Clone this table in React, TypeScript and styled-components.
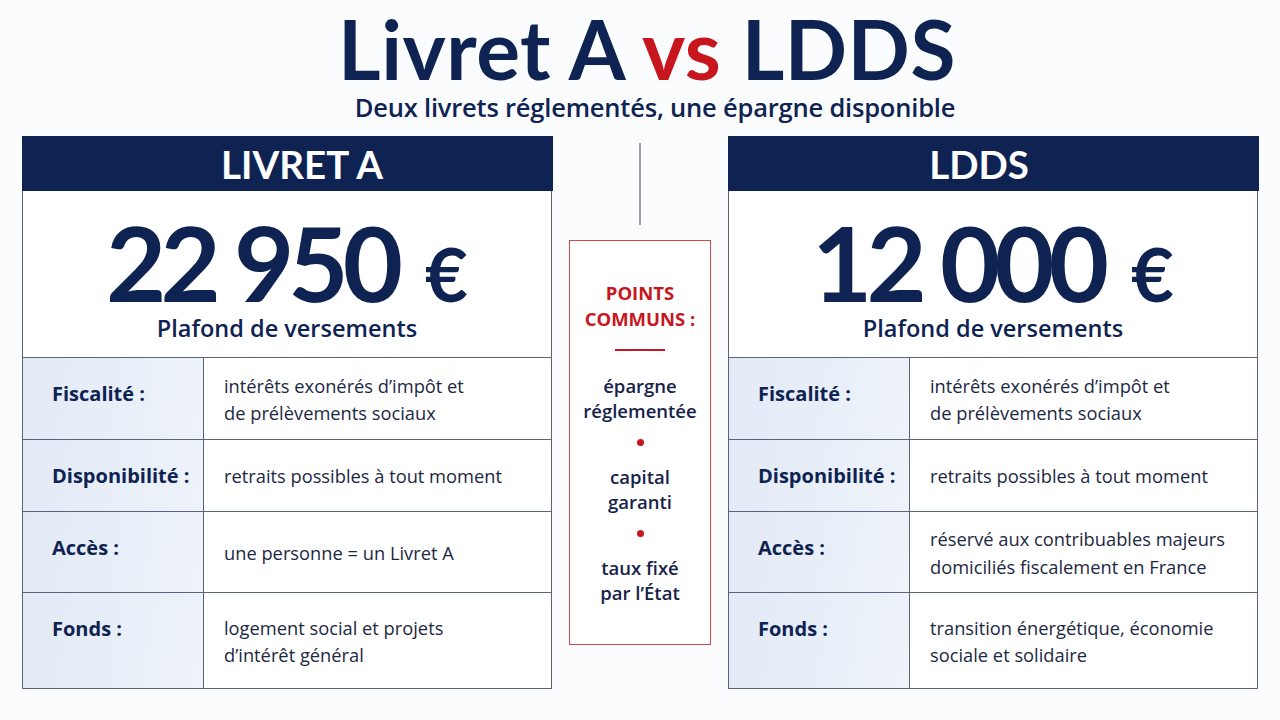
import React from "react";
import styled, { createGlobalStyle } from "styled-components";

const GlobalStyle = createGlobalStyle`
  html, body { margin: 0; padding: 0; }
  body {
    background: #fbfcfe;
    font-family: "Open Sans", Lato, sans-serif;
    color: #0f2350;
  }
`;

const NAVY = "#0e2352";
const RED = "#c8161e";
const LINE = "#5a6479";

const Page = styled.div`
  width: 1280px;
  height: 720px;
  display: flex;
  flex-direction: column;
  align-items: center;
  overflow: hidden;
`;

const Title = styled.h1`
  margin: 0 0 0 14px;
  font-family: Lato, "Open Sans", sans-serif;
  font-size: 82px;
  line-height: 96px;
  font-weight: 700;
  color: ${NAVY};
  letter-spacing: 0.5px;
`;

const Accent = styled.span`
  color: ${RED};
`;

const Subtitle = styled.div`
  margin: -2px 0 0 30px;
  font-size: 25.5px;
  line-height: 26px;
  font-weight: 600;
  color: ${NAVY};
  letter-spacing: -0.2px;
`;

const Board = styled.div`
  margin-top: 16px;
  align-self: flex-start;
  margin-left: 22px;
  display: grid;
  grid-template-columns: 530px 176px 530px;
  align-items: start;
`;

const Card = styled.section`
  background: #ffffff;
  border: 1.5px solid ${LINE};
  display: flex;
  flex-direction: column;
`;

const CardHeader = styled.div<{ $shift: number }>`
  height: 55px;
  box-sizing: border-box;
  padding-top: 2px;
  padding-left: ${(p) => Math.max(0, p.$shift * 2)}px;
  padding-right: ${(p) => Math.max(0, -p.$shift * 2)}px;
  margin: -1.5px -1.5px 0;
  background: ${NAVY};
  color: #ffffff;
  font-family: Lato, "Open Sans", sans-serif;
  font-size: 38.5px;
  line-height: 1;
  font-weight: 700;
  display: flex;
  align-items: center;
  justify-content: center;
`;

const Hero = styled.div`
  height: 166px;
  box-sizing: border-box;
  display: flex;
  flex-direction: column;
  align-items: center;
  padding-top: 19px;
`;

const Amount = styled.div`
  font-family: Lato, "Open Sans", sans-serif;
  font-size: 104px;
  line-height: 104px;
  font-weight: 700;
  color: ${NAVY};
  letter-spacing: -6px;
  white-space: nowrap;
`;

const Euro = styled.span`
  font-size: 74px;
  line-height: 1;
  letter-spacing: 0;
  margin-left: 28px;
`;

const Caption = styled.div`
  font-size: 23.5px;
  line-height: 28px;
  font-weight: 600;
  color: ${NAVY};
`;

const Row = styled.div<{ $h: number }>`
  height: ${(p) => p.$h}px;
  box-sizing: border-box;
  display: grid;
  grid-template-columns: 181px 1fr;
  border-top: 1.5px solid ${LINE};
`;

const Label = styled.div`
  background: linear-gradient(100deg, #e3eaf6 0%, #eef3fa 100%);
  border-right: 1.5px solid ${LINE};
  padding: 23.5px 0 0 29px;
  font-size: 20px;
  line-height: 26px;
  font-weight: 700;
  color: ${NAVY};
`;

const Value = styled.div`
  display: flex;
  align-items: center;
  padding: 2px 0 0 20px;
  font-size: 18.3px;
  line-height: 27.5px;
  color: #1d2843;
`;

const Middle = styled.div`
  display: flex;
  flex-direction: column;
  align-items: center;
`;

const VLine = styled.div`
  width: 1.5px;
  height: 82px;
  margin-top: 7px;
  background: #9aa1ad;
`;

const CommonBox = styled.div`
  margin-top: 15px;
  width: 142px;
  height: 405px;
  box-sizing: border-box;
  border: 1.5px solid #d2494b;
  background: #ffffff;
  display: flex;
  flex-direction: column;
  align-items: center;
  padding-top: 39px;
  text-align: center;
`;

const CommonTitle = styled.div`
  font-size: 18.5px;
  line-height: 26px;
  font-weight: 700;
  color: ${RED};
`;

const Rule = styled.div`
  width: 50px;
  height: 2px;
  background: ${RED};
  margin: 17px 0 22px;
`;

const Item = styled.div`
  font-size: 18.5px;
  line-height: 25px;
  font-weight: 600;
  color: #16224a;
`;

const Dot = styled.div`
  width: 7px;
  height: 7px;
  border-radius: 50%;
  background: ${RED};
  margin: 16px 0 18px;
`;

type RowData = { label: string; value: React.ReactNode; h: number };

const heights = [82, 72, 81, 96];

const livretRows: RowData[] = [
  { label: "Fiscalité :", value: <>intérêts exonérés d’impôt et<br />de prélèvements sociaux</>, h: heights[0] },
  { label: "Disponibilité :", value: "retraits possibles à tout moment", h: heights[1] },
  { label: "Accès :", value: "une personne = un Livret A", h: heights[2] },
  { label: "Fonds :", value: <>logement social et projets<br />d’intérêt général</>, h: heights[3] },
];

const lddsRows: RowData[] = [
  { label: "Fiscalité :", value: <>intérêts exonérés d’impôt et<br />de prélèvements sociaux</>, h: heights[0] },
  { label: "Disponibilité :", value: "retraits possibles à tout moment", h: heights[1] },
  { label: "Accès :", value: <>réservé aux contribuables majeurs<br />domiciliés fiscalement en France</>, h: heights[2] },
  { label: "Fonds :", value: <>transition énergétique, économie<br />sociale et solidaire</>, h: heights[3] },
];

function Product({
  name,
  amount,
  rows,
  shift,
}: {
  name: string;
  amount: string;
  rows: RowData[];
  shift: number;
}) {
  return (
    <Card>
      <CardHeader $shift={shift}>{name}</CardHeader>
      <Hero>
        <Amount>
          {amount}
          <Euro>€</Euro>
        </Amount>
        <Caption>Plafond de versements</Caption>
      </Hero>
      {rows.map((r) => (
        <Row key={r.label} $h={r.h}>
          <Label>{r.label}</Label>
          <Value>
            <span>{r.value}</span>
          </Value>
        </Row>
      ))}
    </Card>
  );
}

export default function App() {
  return (
    <>
      <GlobalStyle />
      <Page>
        <Title>
          Livret A <Accent>vs</Accent> LDDS
        </Title>
        <Subtitle>Deux livrets réglementés, une épargne disponible</Subtitle>
        <Board>
          <Product name="LIVRET A" amount="22 950" rows={livretRows} shift={15} />
          <Middle>
            <VLine />
            <CommonBox>
              <CommonTitle>
                POINTS
                <br />
                COMMUNS :
              </CommonTitle>
              <Rule />
              <Item>
                épargne
                <br />
                réglementée
              </Item>
              <Dot />
              <Item>
                capital
                <br />
                garanti
              </Item>
              <Dot />
              <Item>
                taux fixé
                <br />
                par l’État
              </Item>
            </CommonBox>
          </Middle>
          <Product name="LDDS" amount="12 000" rows={lddsRows} shift={-14} />
        </Board>
      </Page>
    </>
  );
}
